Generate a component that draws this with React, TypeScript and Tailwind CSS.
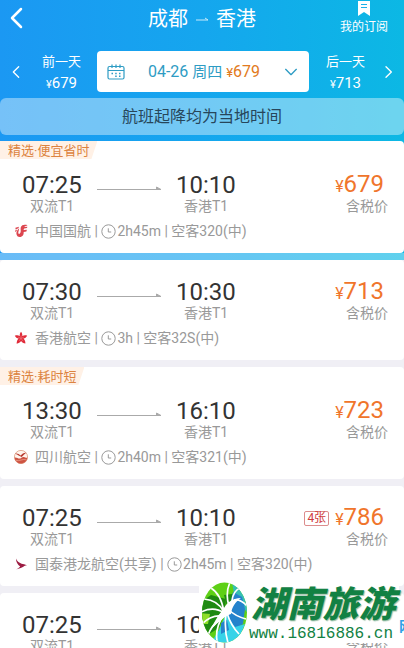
import React from "react";

type Airline = "airchina" | "hongkong" | "sichuan" | "dragon";

interface Flight {
  tag?: string;
  depart: string;
  arrive: string;
  airline: string;
  logo: Airline;
  duration: string;
  plane: string;
  price: number;
  seats?: string;
}

const flights: Flight[] = [
  { tag: "精选·便宜省时", depart: "07:25", arrive: "10:10", airline: "中国国航", logo: "airchina", duration: "2h45m", plane: "空客320(中)", price: 679 },
  { depart: "07:30", arrive: "10:30", airline: "香港航空", logo: "hongkong", duration: "3h", plane: "空客32S(中)", price: 713 },
  { tag: "精选·耗时短", depart: "13:30", arrive: "16:10", airline: "四川航空", logo: "sichuan", duration: "2h40m", plane: "空客321(中)", price: 723 },
  { depart: "07:25", arrive: "10:10", airline: "国泰港龙航空(共享)", logo: "dragon", duration: "2h45m", plane: "空客320(中)", price: 786, seats: "4张" },
  { depart: "07:25", arrive: "10:10", airline: "国泰港龙航空(共享)", logo: "dragon", duration: "2h45m", plane: "空客320(中)", price: 786 },
];

function Chevron({ d, className }: { d: string; className: string }) {
  return (
    <svg viewBox="0 0 24 24" className={className} fill="none" stroke="currentColor" strokeLinecap="round" strokeLinejoin="round" aria-hidden="true">
      <path d={d} />
    </svg>
  );
}

function AirlineLogo({ name }: { name: Airline }) {
  if (name === "airchina") {
    return (
      <svg viewBox="0 0 14 14" className="size-3.5" aria-hidden="true">
        <path d="M13.600 1.200C10.500 .2 7.600 .8 6.800 3.200 6.200 5.400 7.300 6.500 6.400 8.800 5.700 10.400 4.400 10 4.300 9 4.200 7.800 5 6.200 5.200 4.200 4 5 2.200 7.400 2.400 9.800 2.600 12.600 5.200 13.800 7.600 12.500 10 11.200 9.600 9 9.700 7.900L12.400 7.500 12.900 5.800 9.700 6.100C9.600 5.400 9.700 4.800 10.200 4.400L13 4.100 13.400 2.700 10.200 3C10.800 2.200 12 1.700 13.600 1.200Z" fill="#dc4650" />
        <path d="M1.400 3.800 5 2.800 4.400 4.300 1.600 5.400ZM1.200 6.400 3.200 5.400 2.400 7.200 1.200 8Z" fill="#dc4650" />
      </svg>
    );
  }
  if (name === "hongkong") {
    return (
      <svg viewBox="0 0 14 14" className="size-3.5" aria-hidden="true">
        <path d="M7 .8C8.300 2.300 8.400 3.600 8.300 5 10 4.200 11.600 4.100 13.200 4.800 12.200 6.500 11 7.200 9.500 7.600 11 9 11.500 10.900 11.400 12.600 9.500 12.300 8 11.400 7.100 10 6 11.400 4.600 12.400 2.700 12.700 2.500 10.800 3.300 9 4.600 7.600 3 7.300 1.600 6.400.8 4.800 2.600 4 4.400 4.200 5.800 5 5.600 3.400 6 2.100 7 .8Z" fill="#e02c3a" />
        <path d="M7 7.400 7.100 4.500M7 7.400 9.800 6.200M7 7.400 9 10M7 7.400 5.100 10M7 7.400 4.100 6.200" stroke="#f7a5a5" strokeWidth=".4" />
      </svg>
    );
  }
  if (name === "sichuan") {
    return (
      <svg viewBox="0 0 14 14" className="size-3.5" aria-hidden="true">
        <circle cx="7" cy="7" r="6.600" fill="#fff5ee" stroke="#d9906f" strokeWidth=".7" />
        <path d="M.6 7.500C2.500 7.100 4 8.600 5.400 8.600 7 8.600 8 6.600 9.800 7 11.400 7.300 12.200 8.300 13.400 7.600 13 11.300 10.300 13.600 7 13.600 3.600 13.600.9 11 .6 7.500Z" fill="#ce5443" />
        <path d="M1.200 3.800C3.400 3.200 5 4.200 6.600 5.600 8.400 3.400 10.400 2.200 12.300 2.800 10.500 4 9.200 5.800 7.600 6.900 5.500 6.400 3.800 4.500 1.200 3.800Z" fill="#b83d31" />
        <path d="M2 10.300C5 11.800 9 8.300 12.400 9.800" stroke="#f1b8a4" strokeWidth=".6" fill="none" />
      </svg>
    );
  }
  return (
    <svg viewBox="0 0 14 14" className="size-3.5" aria-hidden="true">
      <path d="M2 1.600C2.800 4 5 5.800 7.600 6.800 9.200 7.400 10.800 7.300 13 8.300 10.800 8.500 9.600 9.500 8.400 10.300 6.200 11.600 4 11.800 2.200 12.400 4 11.400 5.400 10.600 6.200 9.500 3.600 7.800 1.900 4.900 2 1.600Z" fill="#9c1c42" />
    </svg>
  );
}

function Clock() {
  return (
    <svg viewBox="0 0 15 15" className="size-[15px]" fill="none" stroke="#999" strokeWidth="1" aria-hidden="true">
      <circle cx="7.500" cy="7.500" r="6.700" />
      <path d="M7.300 4.300V8H10.200" />
    </svg>
  );
}

function FlightCard({ flight }: { flight: Flight }) {
  return (
    <article className="rounded-[4px] bg-white pb-3">
      {flight.tag ? (
        <div className="h-8">
          <span className="block h-[18px] w-fit bg-[#fff1e6] pr-2 pl-2 text-[13px] leading-[20px] text-[#dc8340] [clip-path:polygon(0_0,100%_0,calc(100%-6px)_100%,0_100%)]">
            {flight.tag}
          </span>
        </div>
      ) : (
        <div className="h-5" />
      )}
      <div className="flex pr-4 pl-[22px]">
        <div className="w-[75px]">
          <div className="text-2xl leading-6 text-[#333]">{flight.depart}</div>
          <div className="pl-2 text-sm leading-[18px] text-[#999]">双流T1</div>
        </div>
        <svg viewBox="0 0 64 6" className="mt-3 h-1.5 w-16" aria-hidden="true">
          <path d="M0 4.500H64M64 4.500 59.500 2V4.500Z" stroke="#aaa" strokeWidth="1" fill="#aaa" />
        </svg>
        <div className="ml-[15px]">
          <div className="text-2xl leading-6 text-[#333]">{flight.arrive}</div>
          <div className="pl-2 text-sm leading-[18px] text-[#999]">香港T1</div>
        </div>
        <div className="ml-auto flex flex-col items-end">
          <div className="flex h-6 items-center pr-1 text-[#f0752b]">
            {flight.seats && (
              <span className="mr-1.5 rounded-xs border border-[#dc8d8d] px-0.5 text-xs leading-[13px] text-[#cf3b3b]">{flight.seats}</span>
            )}
            <span className="text-2xl leading-6">
              <span className="text-base leading-6">¥</span>
              {flight.price}
            </span>
          </div>
          <div className="text-sm leading-[18px] text-[#999]">含税价</div>
        </div>
      </div>
      <div className="mt-1.5 flex h-5 items-center pl-3.5 text-sm leading-5 whitespace-pre text-[#999]">
        <AirlineLogo name={flight.logo} />
        <span className="pl-[7px]">{flight.airline} | </span>
        <Clock />
        <span className="pl-px">{flight.duration} | {flight.plane}</span>
      </div>
    </article>
  );
}

function Watermark() {
  return (
    <div className="absolute right-[5px] bottom-[5px] flex h-[61px] w-[200px] items-center bg-white">
      <svg viewBox="0 0 48 61" className="h-[61px] w-12 shrink-0" aria-hidden="true">
        <defs>
          <clipPath id="globe">
            <ellipse cx="25.500" cy="30.500" rx="22.500" ry="30" />
          </clipPath>
        </defs>
        <g clipPath="url(#globe)">
          <path d="M0 0H48V61H0Z" fill="#5ed016" />
          <path d="M2 20 12 13 27 17 26 30 20 46 10 52 0 44Z" fill="#1f8a12" />
          <path d="M25 13 33 12 36 18 28 24Z" fill="#1f8a12" />
          <path d="M33 0 48 12V30L36 17Z" fill="#35bfb4" />
          <path d="M34 10 43 15 46 27 44 42 34 48 28 34Z" fill="#2583cc" />
          <path d="M27 32 36 45 46 42 38 61H12L20 48Z" fill="#36d3e8" />
          <path d="M22 41 28 38 30 48 22 52Z" fill="#2583cc" />
          <path d="M0 31 11 32 9 42 2 42Z" fill="#8ede28" />
          <path d="M12 47C17 37 19 33 24 28 27 21 33 16 42 16 36 20 33 25 32 32 27 33 20 40 12 47Z" fill="#fff" />
          <path d="M25 30Q22 12 12 6M25 30Q19 18 5 17M25 31Q15 24 2 30M22 34Q12 33 3 42M20 38Q13 43 9 53M24 34Q16 46 18 59M27 32Q25 47 29 61M28 31Q32 44 40 52M30 28Q36 34 47 37M30 24Q26 12 31 0M33 19Q34 9 41 6M35 18Q42 17 48 24" stroke="#fff" strokeWidth="1.700" fill="none" />
        </g>
      </svg>
      <div className="text-[#128143]">
        <div className="pl-1 text-[36px] leading-[42px] font-black whitespace-nowrap italic [text-shadow:1px_1px_1px_#9abfa5]">湖南旅游</div>
        <div className="pl-0.5 font-['Liberation_Mono',monospace] text-base leading-[16px]">www.16816886.cn</div>
      </div>
    </div>
  );
}

export default function App() {
  const [first, ...rest] = flights;
  return (
    <main className="relative h-screen overflow-hidden bg-[#f0eff5] font-['Roboto','Noto_Sans_CJK_SC',sans-serif]">
      <div className="bg-linear-to-r from-[#1b98f3] via-[#15a6ee] to-[#0cb8e4]">
        <header className="grid h-[46px] grid-cols-[1fr_auto_1fr] text-white">
          <button type="button" aria-label="返回" className="mt-1.5 ml-1.5 size-6 self-start">
            <Chevron d="M15 3 6 12 15 21" className="size-6 stroke-[2.5]" />
          </button>
          <h1 className="flex items-center gap-2 pb-2 text-xl leading-7">
            成都
            <svg viewBox="0 0 12 4" className="h-1 w-3" aria-hidden="true">
              <path d="M0 3H12L9 1" stroke="#c7eafb" strokeWidth="1" fill="none" />
            </svg>
            香港
          </h1>
          <button type="button" className="mr-4 flex flex-col items-center justify-self-end text-xs leading-[22px]">
            <svg viewBox="0 0 12 16" className="h-4 w-3" aria-hidden="true">
              <path d="M0 1H12V16L6 12 0 16Z" fill="#fff" />
              <path d="M3 4.500H9M3 7.500H9" stroke="#1cb0e9" strokeWidth="1" />
            </svg>
            <span className="whitespace-nowrap">我的订阅</span>
          </button>
        </header>

        <nav className="mt-[5px] flex h-[41px] text-white">
          <button type="button" className="flex w-[97px] items-center pl-2">
            <Chevron d="M16 4 8 12 16 20" className="size-4 stroke-2" />
            <span className="flex-1 pt-1 pl-0.5">
              <span className="block text-[13px] leading-[21px]">前一天</span>
              <span className="block text-[15px] leading-[22px]"><span className="text-[11px]">¥</span>679</span>
            </span>
          </button>
          <button type="button" className="flex flex-1 items-center rounded-[4px] bg-white px-2.5 text-[#2e9cc4]">
            <svg viewBox="0 0 18 16" className="h-4 w-[18px]" fill="none" stroke="currentColor" strokeWidth="1.200" aria-hidden="true">
              <rect x="1" y="2.500" width="16" height="12.500" rx="1.500" />
              <path d="M1 6.500H17M5 .5V4M9 .5V4M13 .5V4" />
              <path d="M4.500 9.500H6M8.200 9.500H9.700M12 9.500H13.500M8.200 12.200H9.700M12 12.200H13.500" strokeWidth="1.500" />
            </svg>
            <span className="flex-1 pt-0.5 text-base leading-6 whitespace-nowrap">
              04-26 <span className="text-[15px]">周四</span> <span className="text-[#e27a20]"><span className="text-[13px]">¥</span>679</span>
            </span>
            <Chevron d="M4 8 12 16 20 8" className="size-4 stroke-2" />
          </button>
          <button type="button" className="flex w-[95px] items-center pr-2">
            <span className="flex-1 pt-1 pl-0.5">
              <span className="block text-[13px] leading-[21px]">后一天</span>
              <span className="block text-[15px] leading-[22px]"><span className="text-[11px]">¥</span>713</span>
            </span>
            <Chevron d="M9 4 17 12 9 20" className="size-4 stroke-2" />
          </button>
        </nav>

        <p className="mt-1.5 rounded-md bg-white/40 pt-px text-center text-base leading-9 text-[#27465a]">航班起降均为当地时间</p>
        <div className="mt-1.5">
          <FlightCard flight={first} />
        </div>
        <div className="h-[7px] bg-white/35" />
      </div>
      <section className="flex flex-col gap-[7px]" aria-label="航班列表">
        {rest.map((flight, i) => (
          <FlightCard key={i} flight={flight} />
        ))}
      </section>
      <span className="absolute right-0 bottom-[14px] w-[5px] overflow-hidden text-sm leading-4 font-bold text-[#2e9fe6]" aria-hidden="true">网</span>
      <Watermark />
    </main>
  );
}
